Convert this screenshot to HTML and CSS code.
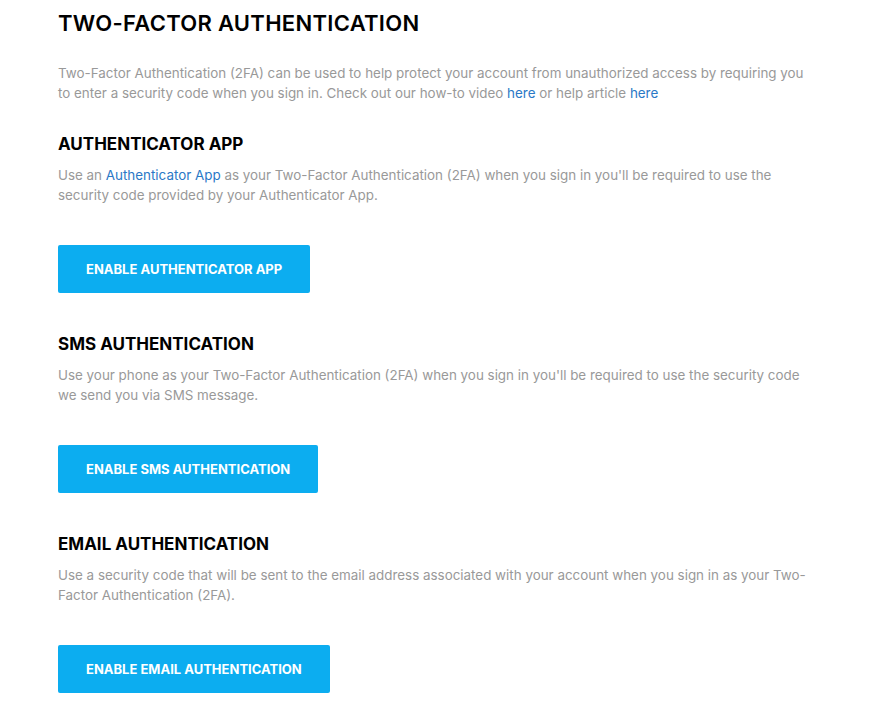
FILE: index.html
```html
<!DOCTYPE html>
<html>
<head>
<meta charset="utf-8">
<link rel="stylesheet" href="styles.css">
</head>
<body>
<main class="page">
  <h1 class="title">TWO-FACTOR AUTHENTICATION</h1>
  <p class="intro">Two-Factor Authentication (2FA) can be used to help protect your account from unauthorized access by requiring you to enter a security code when you sign in. Check out our how-to video <a href="#">here</a> or help article <a href="#">here</a></p>

  <section class="method">
    <h2 class="method-title">AUTHENTICATOR APP</h2>
    <p class="desc">Use an <a href="#">Authenticator App</a> as your Two-Factor Authentication (2FA) when you sign in you'll be required to use the security code provided by your Authenticator App.</p>
    <button class="btn">ENABLE AUTHENTICATOR APP</button>
  </section>

  <section class="method">
    <h2 class="method-title">SMS AUTHENTICATION</h2>
    <p class="desc">Use your phone as your Two-Factor Authentication (2FA) when you sign in you'll be required to use the security code we send you via SMS message.</p>
    <button class="btn">ENABLE SMS AUTHENTICATION</button>
  </section>

  <section class="method">
    <h2 class="method-title">EMAIL AUTHENTICATION</h2>
    <p class="desc">Use a security code that will be sent to the email address associated with your account when you sign in as your Two-Factor Authentication (2FA).</p>
    <button class="btn">ENABLE EMAIL AUTHENTICATION</button>
  </section>
</main>
</body>
</html>
```

FILE: styles.css
```css
* { box-sizing: border-box; }
html, body { margin: 0; padding: 0; background: #fff; }
body {
  font-family: "Inter", "Open Sans", sans-serif;
  color: #000;
}
.page {
  width: 752px;
  margin-left: 58px;
  padding-top: 8px;
}
.title {
  margin: 0;
  font-size: 22px;
  font-weight: 600;
  letter-spacing: 0.3px;
  line-height: 30px;
}
.intro, .desc {
  margin: 0;
  font-size: 13.4px;
  line-height: 20px;
  color: #999;
}
.intro { margin-top: 25px; }
a { color: #2a78c6; text-decoration: none; }
.method { display: flex; flex-direction: column; align-items: flex-start; }
.method-title {
  margin: 0;
  font-size: 17px;
  font-weight: 700;
  line-height: 22px;
}
.method:first-of-type { margin-top: 30px; }
.method + .method { margin-top: 40px; }
.method .desc { margin-top: 10px; }
.btn {
  margin-top: 40px;
  height: 48px;
  padding: 0 28px;
  border: 0;
  border-radius: 2px;
  background: #0cadf0;
  color: #fff;
  font-family: inherit;
  font-size: 13px;
  font-weight: 700;
}
```
